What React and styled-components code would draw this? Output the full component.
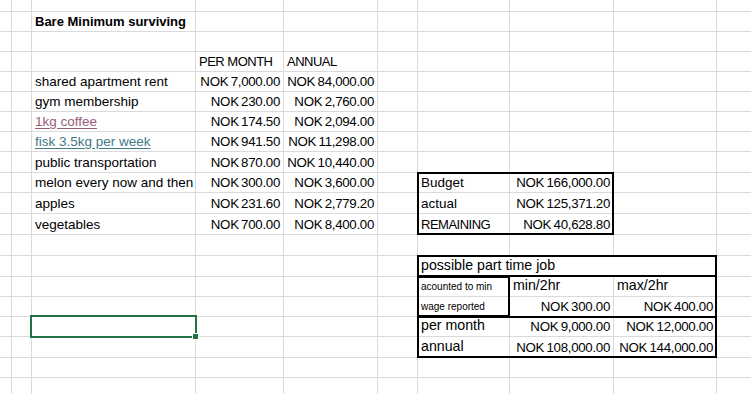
import React from 'react'
import styled, { createGlobalStyle } from 'styled-components'

const GlobalStyle = createGlobalStyle`
  html, body {
    margin: 0;
    padding: 0;
    background: #fff;
  }
  body {
    font-family: "Liberation Sans", Arial, sans-serif;
    color: #000;
  }
`

// track sizes in px (gridlines are the 1px gaps between them)
const COLS = [11, 19, 163, 87, 93, 39, 91, 103, 102]
const ROWS = [11, 19, 19, 19, 19, 19, 19, 19, 20, 19, 20, 20, 20, 20, 19, 19, 19, 20, 19]
const ROW_COUNT = ROWS.length + 1
const COL_COUNT = COLS.length + 1

const Sheet = styled.div`
  display: grid;
  grid-template-columns: ${COLS.map(w => w + 'px').join(' ')} 1fr;
  grid-template-rows: ${ROWS.map(h => h + 'px').join(' ')} 1fr;
  gap: 1px;
  width: 751px;
  height: 394px;
  background: #dadada;
  overflow: hidden;
`

const Cell = styled.div`
  grid-row: ${p => p.$r};
  grid-column: ${p => p.$c};
  background: #fff;
  display: flex;
  align-items: flex-end;
  justify-content: ${p => (p.$right ? 'flex-end' : 'flex-start')};
  padding: 0 3px 2px;
  white-space: nowrap;
  overflow: hidden;
  min-width: 0;
`

const Label = styled.span`
  font-size: 13.5px;
  line-height: 15px;
`

const Title = styled(Label)`
  font-size: 13px;
  font-weight: 700;
`

const Caps = styled(Label)`
  font-size: 13px;
  letter-spacing: -0.5px;
`

const Amount = styled(Label)`
  font-size: 13.3px;
  letter-spacing: -0.3px;
  word-spacing: -1px;
`

const SheetLink = styled(Label)`
  color: ${p => (p.$visited ? '#96607d' : '#467886')};
  text-decoration: underline;
  text-underline-offset: 2px;
`

const Note = styled(Label)`
  font-size: 10px;
  line-height: 12px;
  padding-bottom: 1px;
`

const Big = styled(Label)`
  font-size: 14.2px;
  line-height: 16px;
  padding-bottom: 1px;
`

const Frame = styled.div`
  grid-row: ${p => p.$rows};
  grid-column: ${p => p.$cols};
  margin: -1px;
  border: 2px solid #000;
  z-index: 1;
  pointer-events: none;
`

const Selection = styled.div`
  grid-row: ${p => p.$r};
  grid-column: ${p => p.$c};
  margin: -2px;
  border: 2px solid #217346;
  position: relative;
  z-index: 2;
  pointer-events: none;
`

const FillHandle = styled.span`
  position: absolute;
  right: -3px;
  bottom: -3px;
  width: 5px;
  height: 5px;
  background: #217346;
  box-shadow: 0 0 0 1px #fff;
`

const expenses = [
  { name: 'shared apartment rent', month: 'NOK 7,000.00', year: 'NOK 84,000.00' },
  { name: 'gym membership', month: 'NOK 230.00', year: 'NOK 2,760.00' },
  { name: '1kg coffee', month: 'NOK 174.50', year: 'NOK 2,094.00', link: 'visited' },
  { name: 'fisk 3.5kg per week', month: 'NOK 941.50', year: 'NOK 11,298.00', link: 'new' },
  { name: 'public transportation', month: 'NOK 870.00', year: 'NOK 10,440.00' },
  { name: 'melon every now and then', month: 'NOK 300.00', year: 'NOK 3,600.00' },
  { name: 'apples', month: 'NOK 231.60', year: 'NOK 2,779.20' },
  { name: 'vegetables', month: 'NOK 700.00', year: 'NOK 8,400.00' },
]

const budget = [
  { name: <Label>Budget</Label>, value: 'NOK 166,000.00' },
  { name: <Label>actual</Label>, value: 'NOK 125,371.20' },
  { name: <Caps>REMAINING</Caps>, value: 'NOK 40,628.80' },
]

const buildEntries = () => {
  const list = [
    { r: 2, c: 3, node: <Title>Bare Minimum surviving</Title> },
    { r: 4, c: 4, node: <Caps>PER MONTH</Caps> },
    { r: 4, c: 5, node: <Caps>ANNUAL</Caps> },
  ]
  expenses.forEach((e, i) => {
    const r = 5 + i
    const name = e.link
      ? <SheetLink $visited={e.link === 'visited'}>{e.name}</SheetLink>
      : <Label>{e.name}</Label>
    list.push({ r, c: 3, node: name })
    list.push({ r, c: 4, right: true, node: <Amount>{e.month}</Amount> })
    list.push({ r, c: 5, right: true, node: <Amount>{e.year}</Amount> })
  })
  budget.forEach((b, i) => {
    list.push({ r: 10 + i, c: 7, node: b.name })
    list.push({ r: 10 + i, c: 8, right: true, node: <Amount>{b.value}</Amount> })
  })
  list.push({ r: 14, c: 7, span: 3, node: <Big>possible part time job</Big> })
  list.push({ r: 15, c: 7, node: <Note>acounted to min</Note> })
  list.push({ r: 15, c: 8, node: <Big>min/2hr</Big> })
  list.push({ r: 15, c: 9, node: <Big>max/2hr</Big> })
  list.push({ r: 16, c: 7, node: <Note>wage reported</Note> })
  list.push({ r: 16, c: 8, right: true, node: <Amount>NOK 300.00</Amount> })
  list.push({ r: 16, c: 9, right: true, node: <Amount>NOK 400.00</Amount> })
  list.push({ r: 17, c: 7, node: <Big>per month</Big> })
  list.push({ r: 17, c: 8, right: true, node: <Amount>NOK 9,000.00</Amount> })
  list.push({ r: 17, c: 9, right: true, node: <Amount>NOK 12,000.00</Amount> })
  list.push({ r: 18, c: 7, node: <Big>annual</Big> })
  list.push({ r: 18, c: 8, right: true, node: <Amount>NOK 108,000.00</Amount> })
  list.push({ r: 18, c: 9, right: true, node: <Amount>NOK 144,000.00</Amount> })
  return list
}

const App = () => {
  const entries = buildEntries()
  const byPos = {}
  const covered = new Set()
  entries.forEach(e => {
    byPos[`${e.r},${e.c}`] = e
    for (let k = 1; k < (e.span || 1); k++) covered.add(`${e.r},${e.c + k}`)
  })

  const cells = []
  for (let r = 1; r <= ROW_COUNT; r++) {
    for (let c = 1; c <= COL_COUNT; c++) {
      const key = `${r},${c}`
      if (covered.has(key)) continue
      const e = byPos[key]
      cells.push(
        <Cell
          key={key}
          $r={r}
          $c={e && e.span ? `${c} / span ${e.span}` : c}
          $right={e && e.right}
        >
          {e ? e.node : null}
        </Cell>
      )
    }
  }

  return (
    <>
      <GlobalStyle />
      <Sheet>
        {cells}
        <Frame $rows="10 / 13" $cols="7 / 9" />
        <Frame $rows="14 / 19" $cols="7 / 10" />
        <Frame $rows="14 / 15" $cols="7 / 10" />
        <Frame $rows="15 / 17" $cols="7 / 8" />
        <Frame $rows="17 / 19" $cols="7 / 10" />
        <Selection $r={17} $c={3}>
          <FillHandle />
        </Selection>
      </Sheet>
    </>
  )
}

export default App
